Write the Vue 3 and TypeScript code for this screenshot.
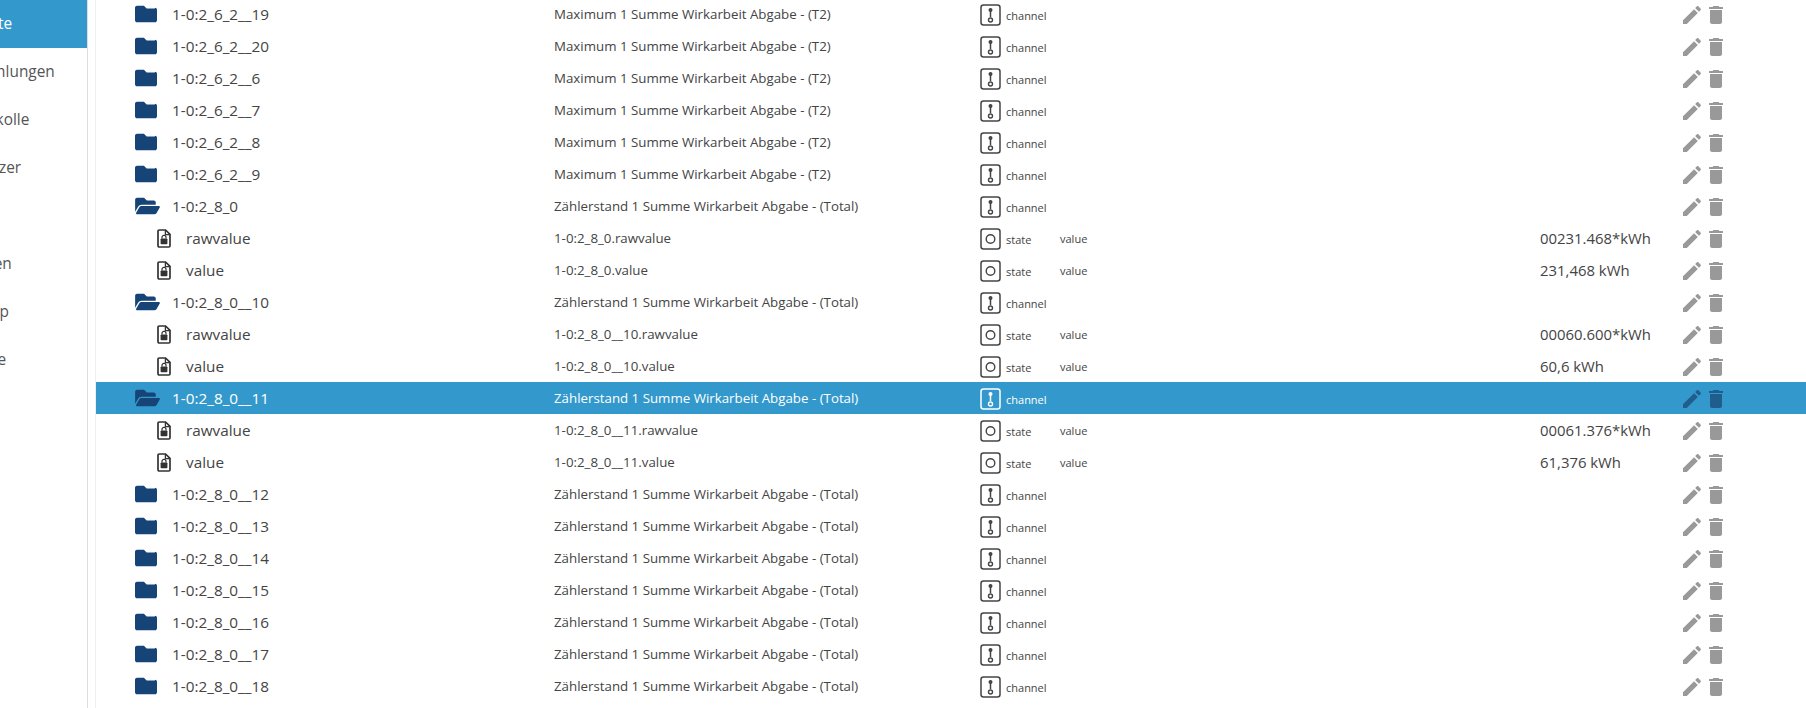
<script setup lang="ts">
type Kind = 'closed' | 'open' | 'file'
interface Row {
  name: string
  title: string
  kind: Kind
  type: 'channel' | 'state'
  role?: string
  value?: string
  selected?: boolean
}
const nav = ['Objekte', 'Aufzählungen', 'Protokolle', 'Benutzer', 'Hosts', 'Dateien', 'Backup', 'Skripte']
const t2 = 'Maximum 1 Summe Wirkarbeit Abgabe - (T2)'
const tot = 'Zählerstand 1 Summe Wirkarbeit Abgabe - (Total)'
const ch = (name: string, title: string, kind: Kind = 'closed', selected = false): Row => ({ name, title, kind, type: 'channel', selected })
const st = (name: string, title: string, value: string): Row => ({ name, title, kind: 'file', type: 'state', role: 'value', value })
const rows: Row[] = [
  ch('1-0:2_6_2__19', t2), ch('1-0:2_6_2__20', t2), ch('1-0:2_6_2__6', t2), ch('1-0:2_6_2__7', t2),
  ch('1-0:2_6_2__8', t2), ch('1-0:2_6_2__9', t2),
  ch('1-0:2_8_0', tot, 'open'),
  st('rawvalue', '1-0:2_8_0.rawvalue', '00231.468*kWh'),
  st('value', '1-0:2_8_0.value', '231,468 kWh'),
  ch('1-0:2_8_0__10', tot, 'open'),
  st('rawvalue', '1-0:2_8_0__10.rawvalue', '00060.600*kWh'),
  st('value', '1-0:2_8_0__10.value', '60,6 kWh'),
  ch('1-0:2_8_0__11', tot, 'open', true),
  st('rawvalue', '1-0:2_8_0__11.rawvalue', '00061.376*kWh'),
  st('value', '1-0:2_8_0__11.value', '61,376 kWh'),
  ...['12', '13', '14', '15', '16', '17', '18'].map((n) => ch('1-0:2_8_0__' + n, tot)),
]
</script>

<template>
  <div class="page">
    <aside class="side">
      <div v-for="(n, i) in nav" :key="n" class="nav" :class="{ on: i === 0 }"><span>{{ n }}</span></div>
    </aside>
    <main class="list">
      <div v-for="(r, i) in rows" :key="i" class="row" :class="{ sel: r.selected }">
        <div class="namecell" :class="{ child: r.kind === 'file' }">
          <svg v-if="r.kind === 'closed'" class="folder" viewBox="0 0 512 512"><path d="M464 128H272l-64-64H48C21.49 64 0 85.49 0 112v288c0 26.51 21.49 48 48 48h416c26.51 0 48-21.49 48-48V160c0-26.51-21.49-48-48-48z"/></svg>
          <svg v-else-if="r.kind === 'open'" class="folder open" viewBox="0 0 576 512"><path d="M572.694 292.093L500.27 416.248A63.997 63.997 0 0 1 444.989 448H45.025c-18.523 0-30.064-20.093-20.731-36.093l72.424-124.155A64 64 0 0 1 152 256h399.964c18.523 0 30.064 20.093 20.73 36.093zM152 224h328v-48c0-26.51-21.49-48-48-48H272l-64-64H48C21.49 64 0 85.49 0 112v278.046l69.077-118.418C86.214 242.25 117.989 224 152 224z"/></svg>
          <svg v-else class="file" viewBox="0 0 14 19">
            <path d="M1 2.2C1 1.5 1.5 1 2.2 1H8.6L13 5.4V16.8C13 17.5 12.5 18 11.8 18H2.2C1.5 18 1 17.5 1 16.8Z" fill="none" stroke="currentColor" stroke-width="1.7" stroke-linejoin="round"/>
            <path d="M8.4 1V5.6H13" fill="none" stroke="currentColor" stroke-width="1.3"/>
            <rect x="3.6" y="9.4" width="6.8" height="5.8" rx=".8" fill="currentColor"/>
            <path d="M5 9.6V8.3a2 2 0 0 1 4 0v1.3" fill="none" stroke="currentColor" stroke-width="1.2"/>
          </svg>
          <span class="name">{{ r.name }}</span>
        </div>
        <div class="title">{{ r.title }}</div>
        <div class="typecell">
          <svg class="ticon" viewBox="0 0 21 22">
            <rect x="1" y="1" width="19" height="20" rx="2.5" fill="none" stroke="currentColor" stroke-width="1.5"/>
            <template v-if="r.type === 'channel'">
              <path d="M10.5 5V13" stroke="currentColor" stroke-width="1.5"/>
              <circle cx="10.5" cy="6" r="2" fill="currentColor"/>
              <circle cx="10.5" cy="16" r="2" fill="none" stroke="currentColor" stroke-width="1.4"/>
            </template>
            <circle v-else cx="10.5" cy="11" r="4.3" fill="none" stroke="currentColor" stroke-width="1.4"/>
          </svg>
          <span class="type">{{ r.type }}</span>
        </div>
        <div class="role">{{ r.role }}</div>
        <div class="value">{{ r.value }}</div>
        <div class="actions">
          <svg viewBox="0 0 24 24"><path d="M3 17.25V21h3.75L17.81 9.94l-3.75-3.75L3 17.25zM20.71 7.04c.39-.39.39-1.02 0-1.41l-2.34-2.34c-.39-.39-1.02-.39-1.41 0l-1.83 1.83 3.75 3.75 1.83-1.83z"/></svg>
          <svg viewBox="0 0 24 24"><path d="M6 19c0 1.1.9 2 2 2h8c1.1 0 2-.9 2-2V7H6v12zM19 4h-3.5l-1-1h-5l-1 1H5v2h14V4z"/></svg>
        </div>
      </div>
    </main>
  </div>
</template>

<style>
html, body { margin: 0; background: #fff; overflow: hidden; }
</style>

<style scoped>
.page {
  display: flex;
  height: 708px;
  overflow: hidden;
  background: #fff;
  color: #444;
  font-family: "Open Sans", "Noto Sans", sans-serif;
}
.side {
  width: 87px;
  flex: none;
  border-right: 1px solid #ddd;
  overflow: hidden;
}
.nav {
  height: 48px;
  display: flex;
  align-items: center;
  font-size: 15.4px;
  color: #555;
  white-space: nowrap;
}
.nav span { margin-left: -44px; padding-bottom: 1px; }
.nav.on { background: #39c; color: #fff; }
.list {
  flex: 1;
  min-width: 0;
  margin-left: 7px;
  border-left: 1px solid #f0f0f0;
  margin-top: -2px;
}
.row {
  display: grid;
  grid-template-columns: 458px 426px 80px 482px 140px 1fr;
  height: 32px;
  align-items: center;
  font-size: 13.3px;
}
.row.sel { background: #39c; color: #fff; }
.namecell {
  display: flex;
  align-items: center;
  padding-left: 39px;
  font-size: 15.3px;
}
.namecell.child { padding-left: 61px; }
.folder { width: 22px; height: 22px; fill: #164477; flex: none; margin-right: 15px; }
.folder.open { width: 25px; margin-right: 12px; }
.file { width: 14px; height: 19px; color: #333; flex: none; margin-right: 15px; }
.title { white-space: nowrap; }
.typecell { display: flex; align-items: center; padding-top: 2px; }
.ticon { width: 21px; height: 22px; flex: none; color: #444; margin-right: 5px; }
.row.sel .ticon { color: #fff; }
.type { font-size: 11px; }
.role { font-size: 11px; }
.value { font-size: 14.9px; margin-left: -2px; white-space: nowrap; }
.actions { display: flex; align-items: center; margin-left: -2px; padding-top: 1px; }
.actions svg { width: 24px; height: 24px; fill: #999; flex: none; }
.row.sel .actions svg { fill: #1f5d8c; }
</style>
